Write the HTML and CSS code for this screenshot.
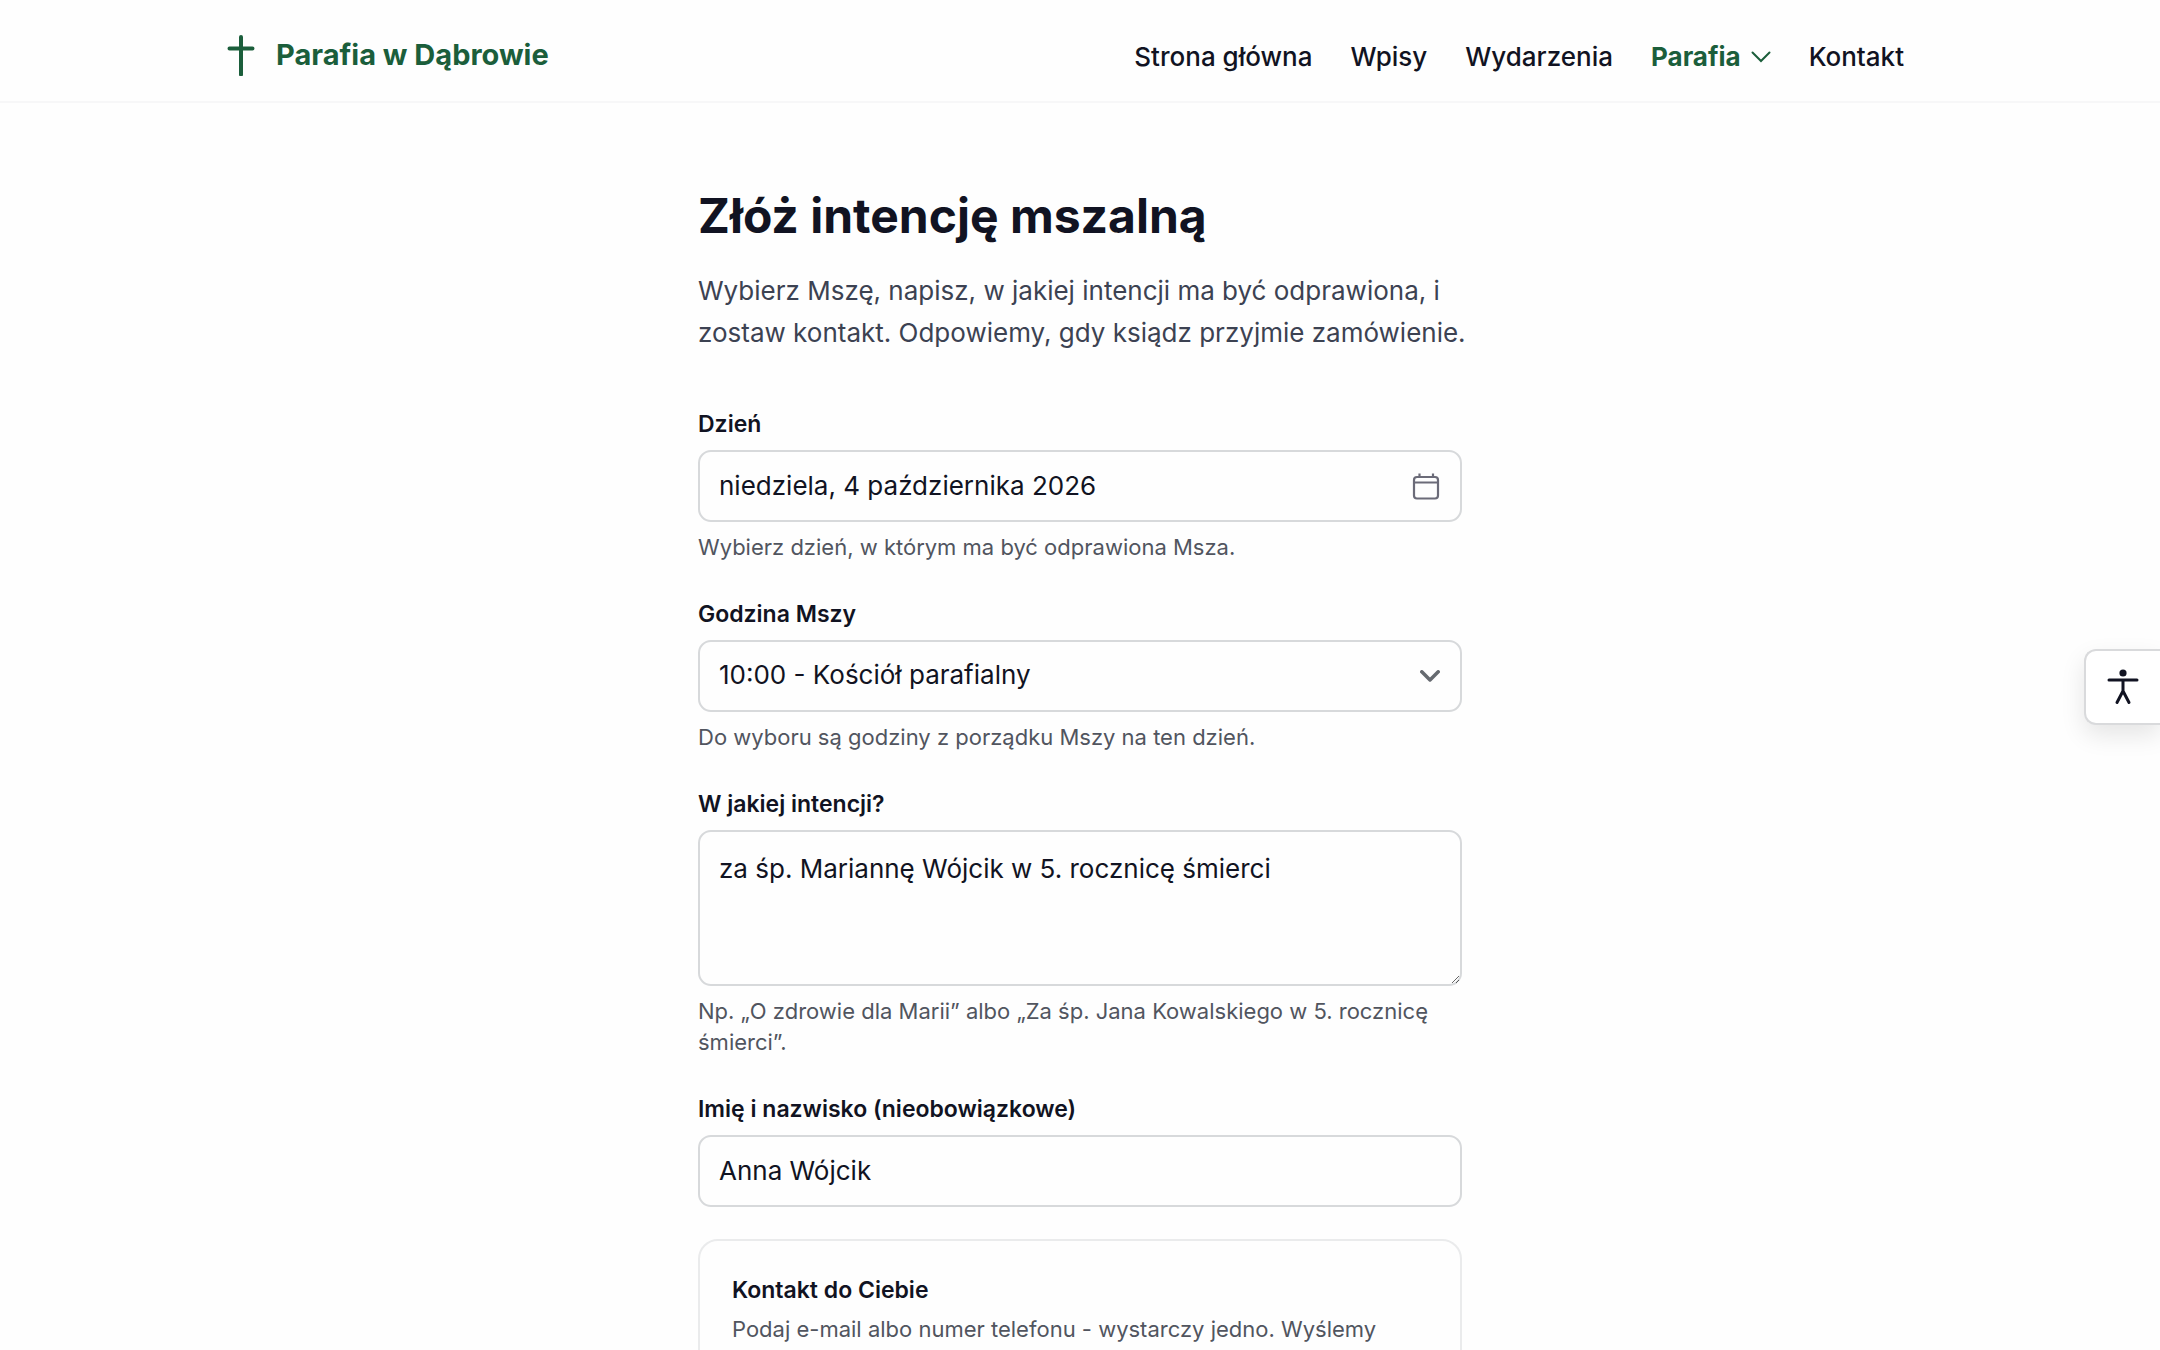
FILE: index.html
```html
<!DOCTYPE html>
<html lang="pl">
<head>
<meta charset="utf-8">
<meta name="viewport" content="width=device-width, initial-scale=1">
<title>Złóż intencję mszalną – Parafia w Dąbrowie</title>
<link rel="stylesheet" href="styles.css">
</head>
<body>
<header class="site-header">
  <div class="header-inner">
    <a class="brand" href="#">
      <svg class="brand-icon" viewBox="0 0 28 42" aria-hidden="true"><path d="M14 3v37.500M2.500 14.500h23"/></svg>
      Parafia w Dąbrowie
    </a>
    <nav class="nav" aria-label="Menu główne">
      <a class="nav-link" href="#">Strona główna</a>
      <a class="nav-link" href="#">Wpisy</a>
      <a class="nav-link" href="#">Wydarzenia</a>
      <button class="nav-link nav-current" type="button">Parafia
        <svg class="nav-chevron" viewBox="0 0 20 12" aria-hidden="true"><path d="M1.500 1.500 10 10l8.500-8.500"/></svg>
      </button>
      <a class="nav-link" href="#">Kontakt</a>
    </nav>
  </div>
</header>

<main class="page">
  <h1 class="title">Złóż intencję mszalną</h1>
  <p class="lead">Wybierz Mszę, napisz, w jakiej intencji ma być odprawiona, i zostaw kontakt. Odpowiemy, gdy ksiądz przyjmie zamówienie.</p>

  <form class="form">
    <div class="field">
      <label class="label" for="day">Dzień</label>
      <div class="control">
        <input class="input" id="day" type="text" value="niedziela, 4 października 2026" aria-describedby="day-help">
        <svg class="control-icon calendar" viewBox="0 0 28 28" aria-hidden="true"><rect x="2" y="5" width="24" height="21.500" rx="3"/><path d="M2 10.500h24M7.500 1.500v4M21 1.500v4"/></svg>
      </div>
      <p class="help" id="day-help">Wybierz dzień, w którym ma być odprawiona Msza.</p>
    </div>

    <div class="field">
      <label class="label" for="hour">Godzina Mszy</label>
      <div class="control">
        <select class="input" id="hour" aria-describedby="hour-help">
          <option>10:00 - Kościół parafialny</option>
        </select>
        <svg class="control-icon chevron" viewBox="0 0 20 12" aria-hidden="true"><path d="M1.800 1.800 10 10l8.200-8.200"/></svg>
      </div>
      <p class="help" id="hour-help">Do wyboru są godziny z porządku Mszy na ten dzień.</p>
    </div>

    <div class="field">
      <label class="label" for="intention">W jakiej intencji?</label>
      <textarea class="input textarea" id="intention" rows="3" aria-describedby="intention-help">za śp. Mariannę Wójcik w 5. rocznicę śmierci</textarea>
      <p class="help" id="intention-help">Np. „O zdrowie dla Marii” albo „Za śp. Jana Kowalskiego w 5. rocznicę śmierci”.</p>
    </div>

    <div class="field">
      <label class="label" for="name">Imię i nazwisko (nieobowiązkowe)</label>
      <input class="input" id="name" type="text" value="Anna Wójcik">
    </div>

    <section class="card">
      <h2 class="label">Kontakt do Ciebie</h2>
      <p class="help">Podaj e-mail albo numer telefonu - wystarczy jedno. Wyślemy</p>
    </section>
  </form>
</main>

<button class="a11y" type="button" aria-label="Ułatwienia dostępu">
  <svg class="a11y-icon" viewBox="0 0 36 36" aria-hidden="true"><circle cx="18" cy="4" r="3.600"/><path d="M4 11h28M18 11v11M12 33.500 18 22l6 11.500"/></svg>
</button>
</body>
</html>
```
FILE: styles.css
```css
:root {
  --ink: #111322;
  --body: #3c4252;
  --muted: #51555f;
  --green: #1b5e3b;
  --line: #d7d9db;
  --paper: #fefefe;
}

*, *::before, *::after { box-sizing: border-box; }

html { scrollbar-width: none; }

body {
  margin: 0;
  background: var(--paper);
  color: var(--ink);
  font-family: Inter, "Liberation Sans", sans-serif;
  font-size: 26px;
  line-height: 42px;
}

h1, h2, p { margin: 0; }

.site-header { border-bottom: 2px solid #f7f7f8; }

.header-inner {
  display: flex;
  align-items: flex-end;
  justify-content: space-between;
  max-width: 1728px;
  margin: 0 auto;
  padding: 34px 40px 23px 11px;
}

.brand {
  display: flex;
  align-items: center;
  gap: 21px;
  padding-bottom: 2px;
  color: var(--green);
  font-size: 29px;
  font-weight: 700;
  text-decoration: none;
}

.brand-icon {
  width: 28px;
  height: 42px;
  fill: none;
  stroke: currentColor;
  stroke-width: 4;
  stroke-linecap: round;
}

.nav { display: flex; gap: 38px; }

.nav-link {
  display: flex;
  align-items: center;
  gap: 10px;
  padding: 0;
  border: 0;
  background: none;
  color: var(--ink);
  font: inherit;
  font-weight: 500;
  text-decoration: none;
}

.nav-current {
  color: var(--green);
  font-weight: 700;
}

.nav-chevron {
  width: 20px;
  height: 12px;
  fill: none;
  stroke: currentColor;
  stroke-width: 2;
  stroke-linecap: round;
}

.page {
  max-width: 764px;
  margin: 0 auto;
  padding: 84px 0;
}

.title {
  font-size: 48px;
  line-height: 58px;
  font-weight: 700;
}

.lead {
  margin: 25px -8px 0 0;
  color: var(--body);
}

.form {
  display: flex;
  flex-direction: column;
  gap: 32px;
  margin-top: 51px;
}

.field {
  display: flex;
  flex-direction: column;
}

.label {
  font-size: 23px;
  line-height: 39px;
  font-weight: 600;
}

.field .label { margin-bottom: 6px; }

.help {
  color: var(--muted);
  font-size: 22px;
  line-height: 31px;
}

.field .help { margin-top: 10px; }

.control { display: grid; align-items: center; }

.control > * { grid-area: 1 / 1; }

.input {
  display: block;
  width: 100%;
  height: 72px;
  margin: 0;
  padding: 0 19px 2px;
  border: 2px solid var(--line);
  border-radius: 13px;
  background: var(--paper);
  color: var(--ink);
  font: inherit;
  appearance: none;
}

.textarea {
  height: 156px;
  padding: 16px 19px;
  resize: both;
}

.control-icon {
  justify-self: end;
  margin-right: 22px;
  fill: none;
  stroke: #6b6b78;
  pointer-events: none;
}

.calendar { width: 28px; height: 28px; stroke-width: 2.200; }

.chevron {
  width: 20px;
  height: 12px;
  stroke: #666a70;
  stroke-width: 3.500;
  stroke-linecap: round;
  stroke-linejoin: round;
}

.card {
  padding: 30px 32px;
  border: 2px solid #eaebec;
  border-radius: 20px;
}

.card .help { margin-top: 4px; }

.a11y {
  position: fixed;
  top: 649px;
  right: 0;
  display: grid;
  place-items: center;
  width: 76px;
  height: 76px;
  padding: 0;
  border: 2px solid #d9dadc;
  border-right: 0;
  border-radius: 12px 0 0 12px;
  background: #fff;
  color: var(--ink);
  box-shadow: 0 10px 24px rgba(0, 0, 0, 0.1);
}

.a11y-icon {
  width: 36px;
  height: 36px;
  fill: none;
  stroke: currentColor;
  stroke-width: 3;
  stroke-linecap: round;
  stroke-linejoin: round;
}

.a11y-icon circle { fill: currentColor; stroke: none; }
```
